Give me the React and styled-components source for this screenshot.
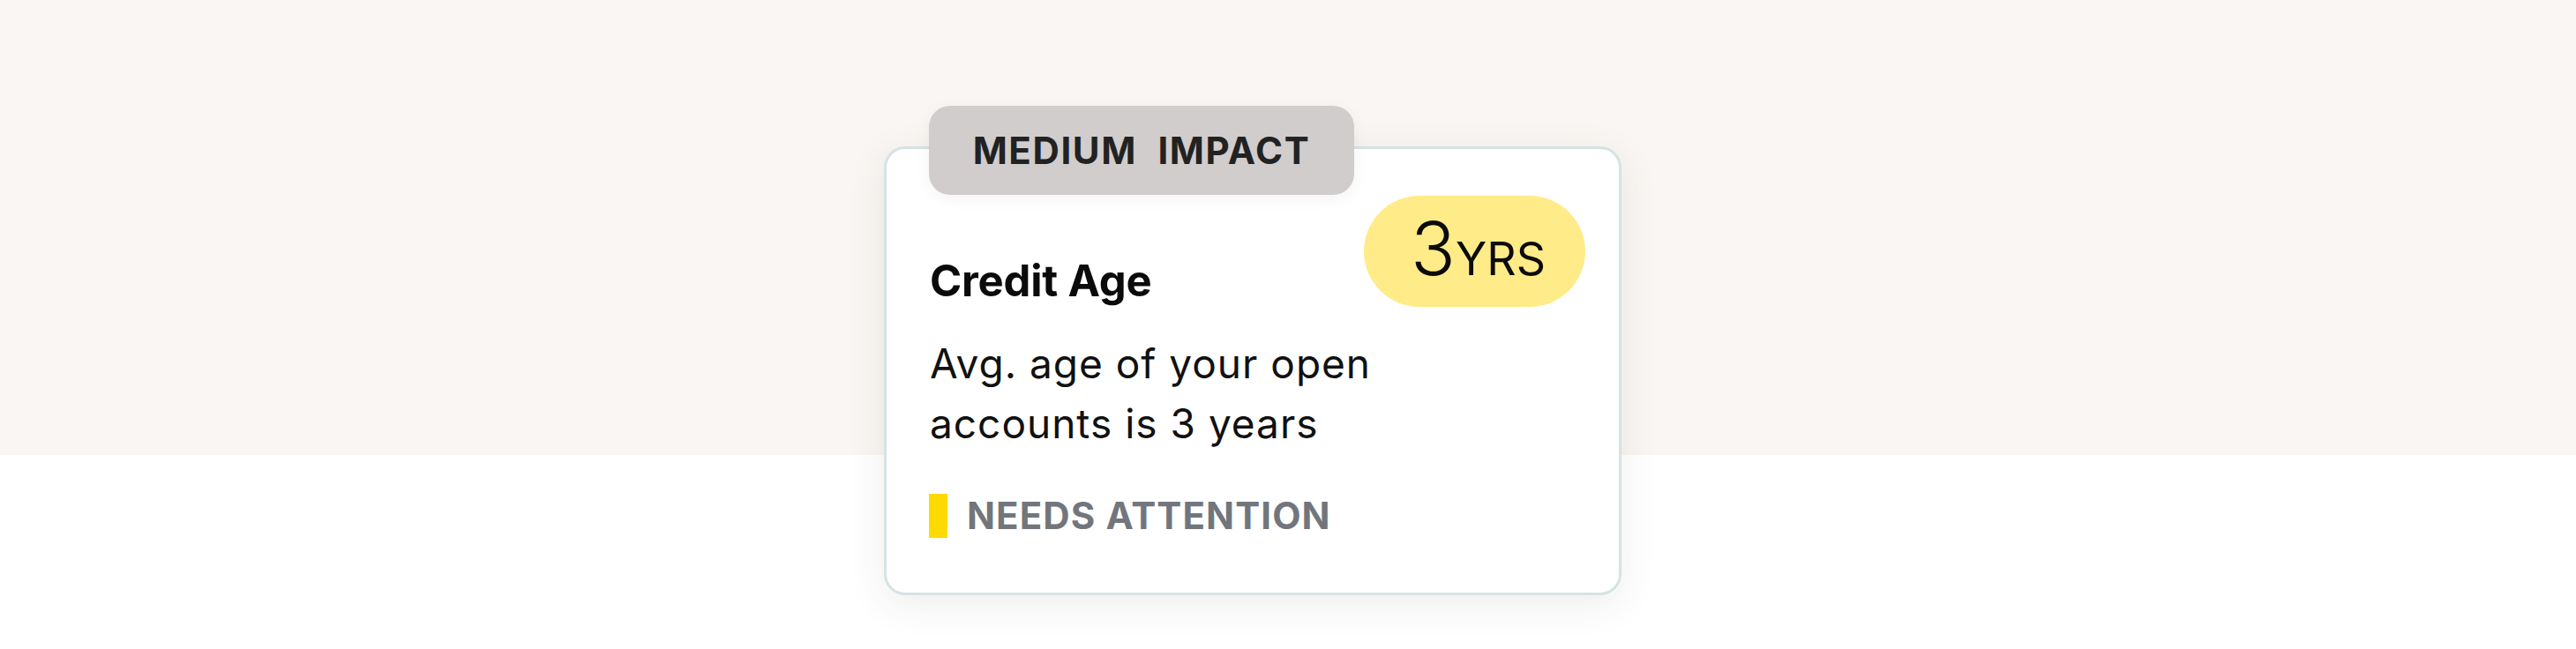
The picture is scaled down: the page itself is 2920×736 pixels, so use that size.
import React from 'react';
import styled, { createGlobalStyle } from 'styled-components';

const GlobalStyle = createGlobalStyle`
  html, body {
    margin: 0;
    padding: 0;
    background: #ffffff;
  }
  body {
    font-family: Inter, "Noto Sans", "Liberation Sans", sans-serif;
    -webkit-font-smoothing: antialiased;
  }
`;

const Page = styled.div`
  width: 2920px;
  height: 736px;
  box-sizing: border-box;
  padding: 166px 0 0 1002px;
  background: linear-gradient(to bottom, #f9f6f3 0, #f9f6f3 516px, #ffffff 516px);
`;

const Card = styled.div`
  position: relative;
  box-sizing: border-box;
  width: 836px;
  height: 509px;
  padding: 53px 38px 0 48px;
  background: #ffffff;
  border: 3px solid #d7e2e4;
  border-radius: 24px;
  box-shadow: 0 10px 44px rgba(60, 50, 40, 0.09);
`;

const ImpactTag = styled.div`
  position: absolute;
  top: -49px;
  left: 48px;
  box-sizing: border-box;
  width: 482px;
  height: 101px;
  display: flex;
  align-items: center;
  justify-content: center;
  background: #d1cdcc;
  border-radius: 24px;
  font-size: 42px;
  font-weight: 700;
  letter-spacing: 1.6px;
  word-spacing: 12px;
  color: #222222;
  box-shadow: 0 4px 18px rgba(0, 0, 0, 0.05);
`;

const Header = styled.div`
  display: flex;
  justify-content: space-between;
  align-items: flex-end;
`;

const Title = styled.h3`
  margin: 0 0 0 1px;
  font-size: 49px;
  font-weight: 700;
  line-height: 58px;
  color: #0b0b0b;
  letter-spacing: -0.2px;
`;

const Duration = styled.div`
  box-sizing: border-box;
  width: 251px;
  height: 126px;
  display: flex;
  align-items: baseline;
  justify-content: center;
  padding: 18px 0 0 8px;
  border-radius: 63px;
  background: #ffeb88;
  color: #0b0b0b;
`;

const DurationValue = styled.span`
  font-size: 84px;
  font-weight: 300;
  line-height: 1;
  letter-spacing: -2px;
`;

const DurationUnit = styled.span`
  font-size: 52px;
  font-weight: 400;
  line-height: 1;
  margin-left: 2px;
`;

const Description = styled.p`
  margin: 30px 0 0 1px;
  width: 600px;
  font-size: 46px;
  font-weight: 400;
  line-height: 68px;
  letter-spacing: 1px;
  color: #111111;
`;

const Status = styled.div`
  display: flex;
  align-items: center;
  gap: 22px;
  margin-top: 46px;
`;

const StatusBar = styled.span`
  display: block;
  width: 21px;
  height: 50px;
  background: ${props => props.color};
`;

const StatusText = styled.span`
  font-size: 42px;
  font-weight: 700;
  letter-spacing: 1.1px;
  color: #72767c;
  line-height: 50px;
`;

const App = () => {
  return (
    <>
      <GlobalStyle />
      <Page>
        <Card>
          <ImpactTag>MEDIUM IMPACT</ImpactTag>
          <Header>
            <Title>Credit Age</Title>
            <Duration>
              <DurationValue>3</DurationValue>
              <DurationUnit>YRS</DurationUnit>
            </Duration>
          </Header>
          <Description>Avg. age of your open accounts is 3 years</Description>
          <Status>
            <StatusBar color="#ffda00" />
            <StatusText>NEEDS ATTENTION</StatusText>
          </Status>
        </Card>
      </Page>
    </>
  );
};

export default App;
